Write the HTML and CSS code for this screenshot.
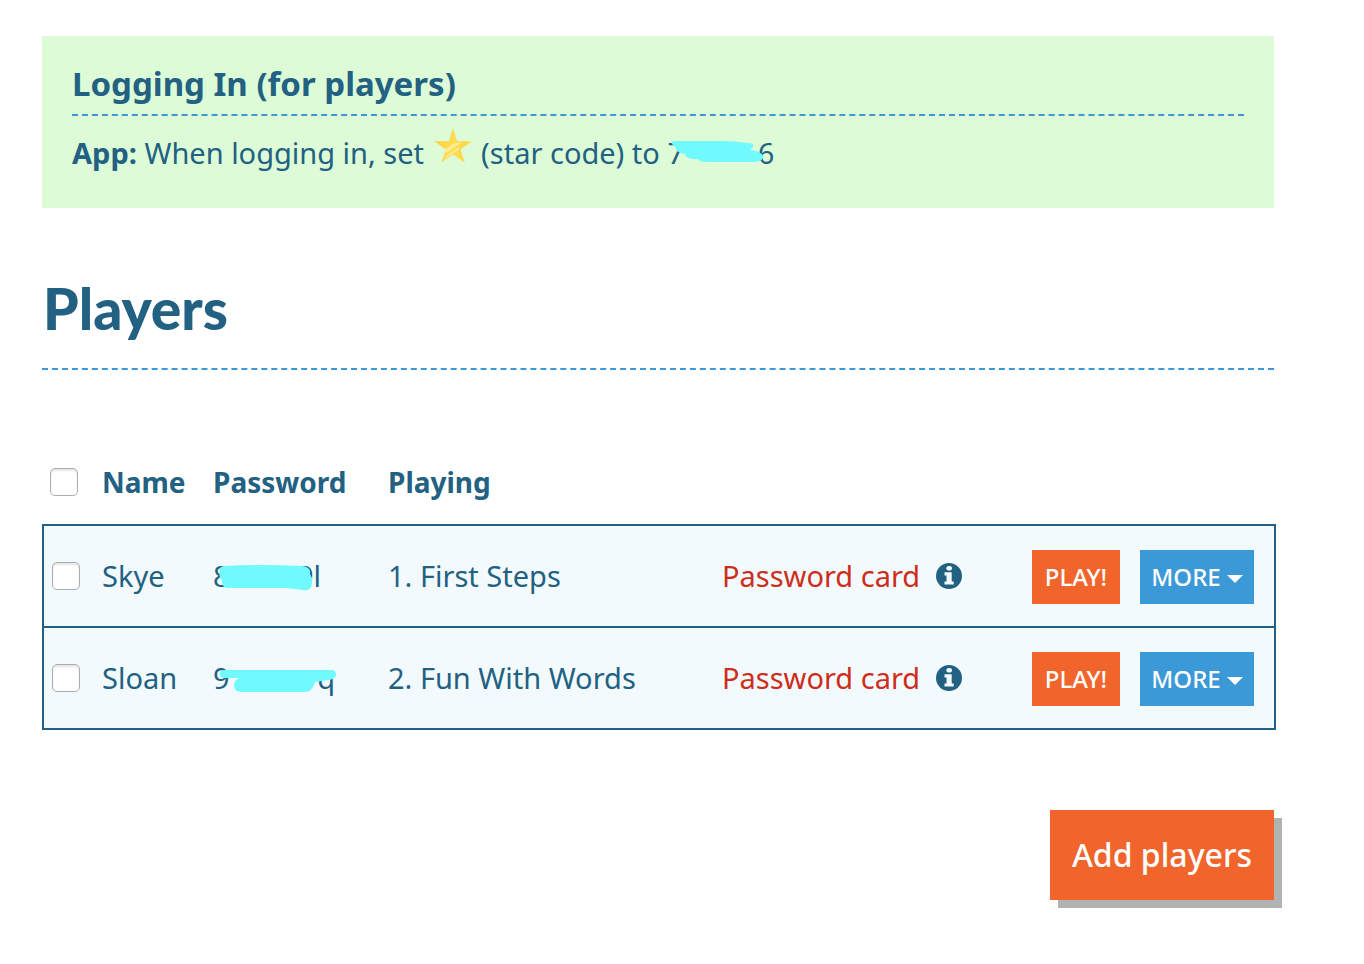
FILE: index.html
```html
<!DOCTYPE html>
<html lang="en">
<head>
<meta charset="utf-8">
<title>Players</title>
<meta name="viewport" content="width=device-width, initial-scale=1">
<link rel="stylesheet" href="styles.css">
</head>
<body>
<svg class="sprite" width="0" height="0" aria-hidden="true">
  <symbol id="info" viewBox="0 0 26 26">
    <circle cx="13" cy="13" r="13" fill="#226182"/>
    <ellipse cx="13.2" cy="5.3" rx="2.8" ry="2.3" fill="#f2fafd"/>
    <path d="M8.5 9.2h7.2v9.2h2v3.2H8.5v-3.2h2v-6h-2z" fill="#f2fafd"/>
  </symbol>
</svg>
<main class="page">
  <section class="notice">
    <h2 class="notice-title">Logging In (for players)</h2>
    <p class="notice-text"><strong>App:</strong> When logging in, set
      <svg class="star" viewBox="0 0 38 36" role="img" aria-label="star">
        <path d="M19 0 23 13 38 13.500 26.500 21.500 31 35 19 26.500 7 34.500 12 22 0 13 15 13.500z" fill="#fddc4e"/>
        <path d="M11 21 25 13h5L12 25zM12 28 25 19l1 2-15 9z" fill="#ffeb9a"/>
        <path d="M19 3 16 14 4 14 14 20M22 14 34 14 25 20 28 31" fill="none" stroke="#f7d34a" stroke-width="1"/>
      </svg>
      (star code) to
      <span class="code code-star"><span>7</span><span>6</span>
        <svg class="scribble" viewBox="0 0 105 32" aria-hidden="true"><path d="M5 4Q3 1 9 1H55Q68 1 80 3 88 3 86 7L83 10Q94 11 96 16 97 21 88 22H41Q32 22 31 19 19 20 18 14 8 12 9 8z" fill="#70fafe"/></svg>
      </span>
    </p>
  </section>

  <h1 class="title">Players</h1>

  <table class="players">
    <colgroup><col class="c-check"><col class="c-name"><col class="c-pass"><col><col class="c-card"><col class="c-actions"></colgroup>
    <thead>
      <tr>
        <th><input class="check" type="checkbox" aria-label="Select all players"></th>
        <th>Name</th><th>Password</th><th>Playing</th><td></td><td></td>
      </tr>
    </thead>
    <tbody>
      <tr>
        <td><input class="check" type="checkbox" aria-label="Select Skye"></td>
        <td>Skye</td>
        <td><span class="code code-skye"><span>8</span><span>9l</span>
          <svg class="scribble" viewBox="0 0 125 32" aria-hidden="true"><path d="M7 7Q6 2 12 2 50 0 88 2 98 2 97 10 101 16 98 23 96 27 90 26L73 24H17Q9 25 9 17 5 12 7 7z" fill="#70fafe"/></svg></span></td>
        <td>1. First Steps</td>
        <td><div class="card"><a href="#card-skye">Password card</a><svg class="info" role="img" aria-label="Information"><use href="#info"/></svg></div></td>
        <td><div class="actions"><button class="btn btn-play" type="button">PLAY!</button><button class="btn btn-more" type="button">MORE<span class="caret"></span></button></div></td>
      </tr>
      <tr>
        <td><input class="check" type="checkbox" aria-label="Select Sloan"></td>
        <td>Sloan</td>
        <td><span class="code code-sloan"><span>9</span><span>q</span>
          <svg class="scribble" viewBox="0 0 125 32" aria-hidden="true"><path d="M11 4H118Q123 4 123 9 123 13 116 14L102 16Q99 26 92 26H28Q21 26 21 19 21 14 27 12L12 12Q7 12 7 8 7 4 11 4z" fill="#70fafe"/></svg></span></td>
        <td>2. Fun With Words</td>
        <td><div class="card"><a href="#card-sloan">Password card</a><svg class="info" role="img" aria-label="Information"><use href="#info"/></svg></div></td>
        <td><div class="actions"><button class="btn btn-play" type="button">PLAY!</button><button class="btn btn-more" type="button">MORE<span class="caret"></span></button></div></td>
      </tr>
    </tbody>
  </table>

  <div class="footer"><button class="add" type="button">Add players</button></div>
</main>
</body>
</html>
```
FILE: styles.css
```css
* { box-sizing: border-box; }
body {
  margin: 0;
  background: #fff;
  color: #226182;
  font: 29px/40px "Noto Sans", "Open Sans", sans-serif;
}
.sprite { display: block; }
.page { padding: 36px 90px 56px 42px; }

.notice {
  padding: 28px 30px 34px;
  background: #ddfbd6;
}
.notice-title {
  margin: 0 0 12px;
  padding-bottom: 10px;
  border-bottom: 2px dashed #3b99d8;
  font-size: 33px;
  line-height: 40px;
}
.notice-text { margin: 0; line-height: 42px; }
.star {
  width: 38px;
  height: 36px;
  margin: 0 2px;
  overflow: visible;
}

.code {
  position: relative;
  display: inline-flex;
  justify-content: space-between;
}
.code-star { width: 107px; }
.code-skye { width: 108px; }
.code-sloan { width: 122px; }
.scribble {
  position: absolute;
  left: 0;
  top: 8px;
  height: 32px;
}

.title {
  margin: 56px 0 80px;
  padding: 2px 1px 18px;
  border-bottom: 2px dashed #3b99d8;
  font: 900 57px/84px Lato, sans-serif;
}

.players {
  width: calc(100% + 2px);
  margin-right: -2px;
  table-layout: fixed;
  border-spacing: 0;
}
.c-check { width: 60px; }
.c-name { width: 111px; }
.c-pass { width: 175px; }
.c-card { width: 310px; }
.c-actions { width: 244px; }
.players th, .players td {
  padding: 0;
  text-align: left;
  white-space: nowrap;
}
.players th { height: 74px; padding-bottom: 10px; font-size: 28px; }
.players th:first-child, .players td:first-child { padding-left: 8px; }
.players tbody td {
  height: 102px;
  border-top: 2px solid #226182;
  background: #f2fafd;
}
.players tbody td:first-child { border-left: 2px solid #226182; }
.players tbody td:last-child { border-right: 2px solid #226182; }
.players tbody tr:last-child td { height: 104px; border-bottom: 2px solid #226182; }

.check {
  appearance: none;
  display: block;
  width: 28px;
  height: 28px;
  margin: 0;
  border: 1px solid #adadad;
  border-radius: 5px;
  background: #fff;
  box-shadow: inset 0 2px 2px #e6e6e6;
}
.card { display: flex; align-items: center; gap: 16px; }
.card a { color: #ce2d1c; text-decoration: none; }
.info { width: 26px; height: 26px; }
.actions { display: flex; justify-content: flex-end; gap: 20px; padding: 2px 20px 0 0; }
.btn {
  display: flex;
  align-items: center;
  justify-content: center;
  height: 54px;
  padding: 0;
  border: 0;
  color: #fff;
  font: 600 24px/34px "Noto Sans", "Open Sans", sans-serif;
}
.btn-play { width: 88px; background: #f1652c; }
.btn-more { width: 114px; gap: 6px; background: #3b99d8; font-weight: 500; }
.btn-play { font-weight: 500; }
.caret {
  margin-top: 4px;
  border: 8px solid transparent;
  border-top-color: #fff;
  border-bottom: 0;
}
.footer { display: flex; justify-content: flex-end; margin-top: 80px; }
.add {
  height: 90px;
  padding: 0 22px;
  border: 0;
  background: #f1652c;
  box-shadow: 8px 8px 0 #b2b2b2;
  color: #fff;
  font: 500 32px/40px "Noto Sans", "Open Sans", sans-serif;
}
```
